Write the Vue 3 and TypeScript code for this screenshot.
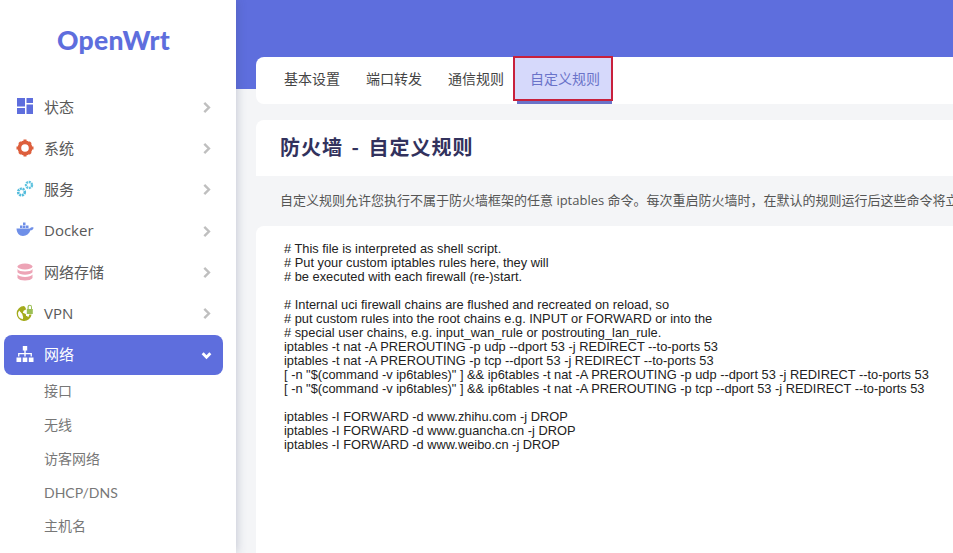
<script setup lang="ts">
interface NavItem { label: string; icon: string; active?: boolean }
const nav: NavItem[] = [
  { label: '状态', icon: 'status' },
  { label: '系统', icon: 'system' },
  { label: '服务', icon: 'services' },
  { label: 'Docker', icon: 'docker' },
  { label: '网络存储', icon: 'storage' },
  { label: 'VPN', icon: 'vpn' },
  { label: '网络', icon: 'network', active: true },
]
const sub = ['接口', '无线', '访客网络', 'DHCP/DNS', '主机名']
const tabs = ['基本设置', '端口转发', '通信规则', '自定义规则']
const code = `# This file is interpreted as shell script.
# Put your custom iptables rules here, they will
# be executed with each firewall (re-)start.

# Internal uci firewall chains are flushed and recreated on reload, so
# put custom rules into the root chains e.g. INPUT or FORWARD or into the
# special user chains, e.g. input_wan_rule or postrouting_lan_rule.
iptables -t nat -A PREROUTING -p udp --dport 53 -j REDIRECT --to-ports 53
iptables -t nat -A PREROUTING -p tcp --dport 53 -j REDIRECT --to-ports 53
[ -n "$(command -v ip6tables)" ] && ip6tables -t nat -A PREROUTING -p udp --dport 53 -j REDIRECT --to-ports 53
[ -n "$(command -v ip6tables)" ] && ip6tables -t nat -A PREROUTING -p tcp --dport 53 -j REDIRECT --to-ports 53

iptables -I FORWARD -d www.zhihu.com -j DROP
iptables -I FORWARD -d www.guancha.cn -j DROP
iptables -I FORWARD -d www.weibo.cn -j DROP`
</script>

<template>
  <div class="page">
    <aside class="side">
      <div class="logo">OpenWrt</div>
      <nav class="nav">
        <div v-for="n in nav" :key="n.label" class="item" :class="{ active: n.active }">
          <svg class="ico" viewBox="0 0 18 18">
            <template v-if="n.icon === 'status'">
              <path fill="#5e6edd" d="M1 1h8v8.500H1zM10.500 1H17v5h-6.500zM10.500 7.500H17V17h-6.500zM1 11h8v6H1z" />
            </template>
            <template v-else-if="n.icon === 'system'">
              <circle cx="9" cy="9" r="5.600" fill="none" stroke="#dd5f3d" stroke-width="3.600" />
              <path fill="#dd5f3d" d="M7.500.500h3v3h-3zM7.500 14.500h3v3h-3zM.500 7.500h3v3h-3zM14.500 7.500h3v3h-3zM2.300 4.300l2-2 2 2-2 2zM11.700 4.300l2-2 2 2-2 2zM2.300 13.700l2-2 2 2-2 2zM11.700 13.700l2-2 2 2-2 2z" />
            </template>
            <template v-else-if="n.icon === 'services'">
              <circle cx="5.500" cy="12" r="3.300" fill="none" stroke="#54bcdc" stroke-width="2.600" stroke-dasharray="2 .7" />
              <circle cx="13" cy="5" r="3" fill="none" stroke="#5fc3df" stroke-width="2.400" stroke-dasharray="2 .7" />
            </template>
            <template v-else-if="n.icon === 'docker'">
              <path fill="#6f8fe8" d="M.500 7.500h13.500c.6-1.200 2-1.500 3.700-.8-.5 1.700-1.700 2.500-3.200 2.600C13 13 10.500 15 7 15c-3.800 0-6.300-3-6.500-7.500z" />
              <path fill="#6f8fe8" d="M4 4.500h2.500v2.500H4zM7 4.500h2.500v2.500H7zM7 1.500h2.500v2.500H7zM10 4.500h2.500v2.500H10z" />
            </template>
            <template v-else-if="n.icon === 'storage'">
              <g fill="#eda4b6">
                <ellipse cx="9" cy="3.500" rx="7.500" ry="3" />
                <path d="M1.500 6c1 1.800 4 2.500 7.500 2.500S15.500 7.800 16.500 6v3.300c-1 1.700-4 2.400-7.500 2.400s-6.500-.7-7.500-2.400z" />
                <path d="M1.500 11.600c1 1.700 4 2.400 7.500 2.400s6.500-.7 7.500-2.400V15c-1 1.700-4 2.500-7.500 2.500S2.500 16.700 1.500 15z" />
              </g>
            </template>
            <template v-else-if="n.icon === 'vpn'">
              <path fill="#a4ab1c" d="M8 2a7.500 7.500 0 1 0 7.600 8.500h-2.300a5.300 5.300 0 0 1-1.200 2.700c-.4-.8-1-1.200-2-1.200l-.3-2-3-1.200 1-2.300 2-.8V4.300A7.500 7.500 0 0 0 8 2zM3.200 6.500l3 3.500 1 3.500-.5 1.700a5.300 5.300 0 0 1-3.500-8.700z" />
              <path fill="#9bbf55" d="M11.500 5V3a2.200 2.200 0 0 1 4.500 0v2h.8v5h-6V5zm1.200 0H15V3a1.100 1.100 0 0 0-2.300 0z" />
            </template>
            <template v-else>
              <path fill="#fff" d="M6.800 1h4.400v4.400H9.700V8h6.200v3.600h-1.300V9.200H9.700v2.400H8.300V9.200H3.400v2.400H2.100V8h6.200V5.400H6.800zM.5 12.500h4.700V17H.500zM6.700 12.500h4.600V17H6.700zM12.800 12.500h4.700V17h-4.700z" />
            </template>
          </svg>
          <span class="label">{{ n.label }}</span>
          <svg class="chev" viewBox="0 0 10 10">
            <path v-if="n.active" d="M1.500 3l3.500 3.500L8.500 3" />
            <path v-else d="M3 .8L7.200 5 3 9.200" />
          </svg>
        </div>
      </nav>
      <div class="subnav">
        <div v-for="s in sub" :key="s" class="subitem">{{ s }}</div>
      </div>
    </aside>

    <main class="main">
      <div class="band"></div>
      <div class="content">
        <ul class="tabs">
          <li v-for="(t, i) in tabs" :key="t" class="tab" :class="{ on: i === 3 }">{{ t }}</li>
        </ul>
        <section class="panel">
          <h2 class="title">防火墙 - 自定义规则</h2>
          <p class="desc">自定义规则允许您执行不属于防火墙框架的任意 iptables 命令。每次重启防火墙时，在默认的规则运行后这些命令将立即执行。</p>
          <pre class="code">{{ code }}</pre>
        </section>
      </div>
    </main>
  </div>
</template>

<style>
html, body { margin: 0; overflow: hidden; }
</style>

<style scoped>
.page {
  width: 953px;
  height: 553px;
  display: flex;
  overflow: hidden;
  background: #f4f5f7;
  font-family: "Open Sans", "Noto Sans CJK SC", sans-serif;
}
.side {
  flex: 0 0 236px;
  height: 553px;
  background: #fff;
  box-shadow: 0 0 10px rgba(60, 70, 110, .3);
  position: relative;
  z-index: 2;
  box-sizing: border-box;
  padding: 0 13px 0 4px;
}
.logo {
  height: 85.700px;
  padding-top: 22px;
  box-sizing: border-box;
  text-align: center;
  font: 900 26.500px/36px Lato, sans-serif;
  color: #5e6edd;
  letter-spacing: .3px;
}
.item {
  height: 41.300px;
  display: flex;
  align-items: center;
  padding-left: 12px;
  padding-right: 11px;
  box-sizing: border-box;
  color: #595959;
  font-size: 15px;
}
.item.active {
  height: 40px;
  margin-top: 1.300px;
  padding-bottom: 2px;
  background: #5e6edd;
  color: #fff;
  border-radius: 8px;
}
.ico { width: 18px; height: 18px; flex: none; }
.label { margin-left: 10px; flex: 1; white-space: nowrap; }
.chev { width: 11px; height: 11px; flex: none; position: relative; top: 1px; }
.chev path { fill: none; stroke: #bfbfbf; stroke-width: 2.200; }
.active .chev { top: 2px; }
.active .chev path { stroke: #fff; stroke-width: 2.600; }
.subnav { padding: 0 0 0 40px; margin-top: -0.600px; }
.subitem {
  height: 33.800px;
  line-height: 33.800px;
  font-family: Lato, "Noto Sans CJK SC", sans-serif;
  font-size: 14px;
  color: #777;
  white-space: nowrap;
}
.main { flex: 1; min-width: 0; position: relative; }
.band { height: 89px; background: #5e6edd; }
.content { margin: -32px 0 0 20px; width: 760px; }
.tabs {
  list-style: none;
  margin: 0;
  padding: 0 0 0 16px;
  height: 47px;
  background: #fff;
  border-radius: 8px 0 0 8px;
  display: flex;
  width: 760px;
  box-sizing: border-box;
}
.tab {
  box-sizing: border-box;
  height: 47px;
  padding: 0 12px;
  margin-right: 2px;
  font-size: 14px;
  line-height: 43px;
  color: #444;
  white-space: nowrap;
  position: relative;
}
.tab.on {
  margin-left: -4px;
  color: #6a73c9;
  background: #d6d9fb;
  height: 43px;
  outline: 2px solid #c8203c;
  outline-offset: -1px;
  padding: 0 12px 0 16px;
}
.tab.on::after {
  content: "";
  position: absolute;
  left: 3px;
  right: 0;
  top: 44px;
  height: 3px;
  background: #6a73c9;
}
.panel { margin-top: 16px; }
.title {
  margin: 0;
  height: 56px;
  background: #fff;
  border-radius: 8px 0 0 0;
  padding-left: 24px;
  font: 700 20px/53px "Noto Sans CJK SC", sans-serif;
  color: #32325d;
  letter-spacing: 1px;
  word-spacing: 3px;
  white-space: nowrap;
}
.desc {
  margin: 0;
  height: 50px;
  padding-left: 24px;
  font-size: 13px;
  line-height: 49px;
  color: #555;
  white-space: nowrap;
  overflow: hidden;
}
.code {
  margin: 0;
  height: 340px;
  background: #fff;
  border-radius: 8px 0 0 0;
  box-sizing: border-box;
  padding: 16px 0 0 28px;
  font: 12.830px/14px "Liberation Sans", Arial, sans-serif;
  color: #222;
  white-space: pre;
  overflow: hidden;
  width: 760px;
}
</style>
